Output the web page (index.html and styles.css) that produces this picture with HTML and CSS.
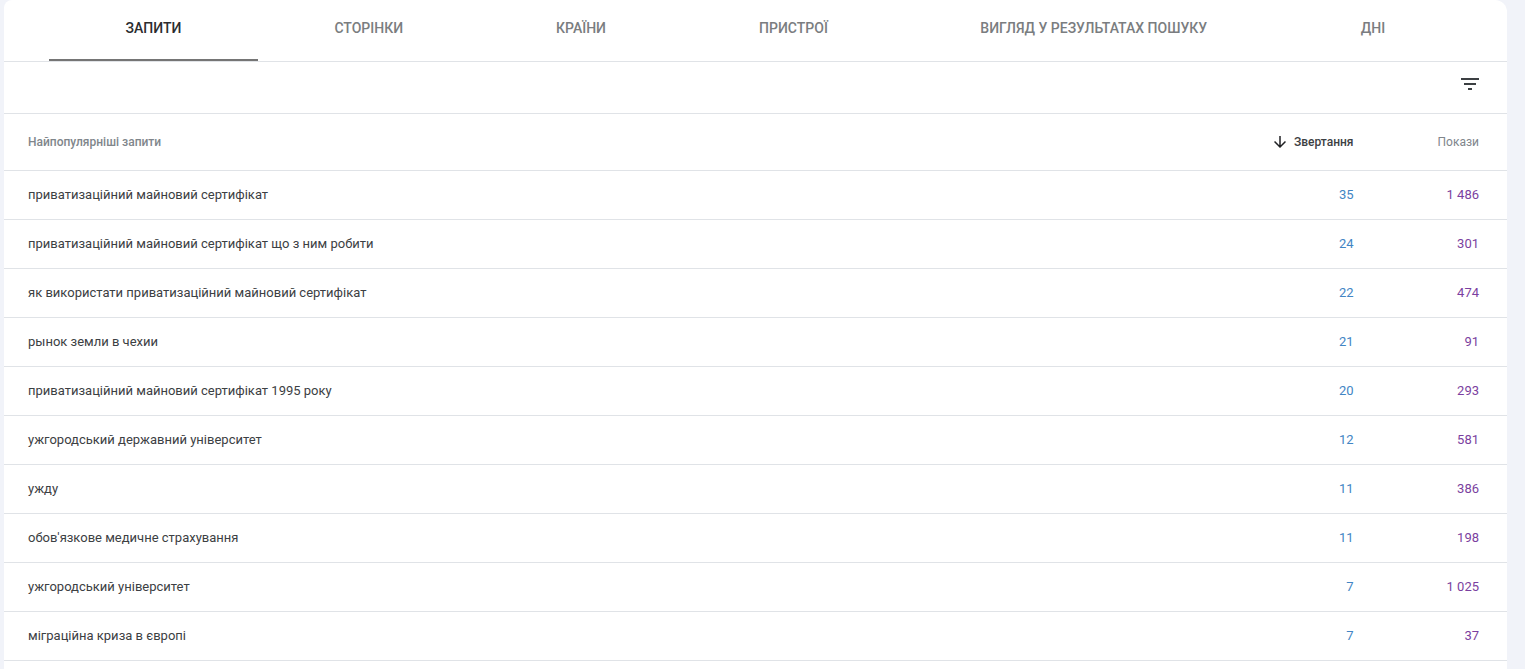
FILE: index.html
```html
<!DOCTYPE html>
<html lang="uk">
<head>
<meta charset="utf-8">
<title>Запити</title>
<link rel="stylesheet" href="styles.css">
</head>
<body>
<main class="card">
  <nav class="tabs">
    <div class="tab tab-active tab-q">ЗАПИТИ</div>
    <div class="tab tab-p">СТОРІНКИ</div>
    <div class="tab tab-c">КРАЇНИ</div>
    <div class="tab tab-d">ПРИСТРОЇ</div>
    <div class="tab tab-s">ВИГЛЯД У РЕЗУЛЬТАТАХ ПОШУКУ</div>
    <div class="tab tab-n">ДНІ</div>
  </nav>
  <div class="toolbar">
    <svg class="filter" width="24" height="24" viewBox="0 0 24 24"><path d="M3 6h18v2H3zM6 11h12v2H6zM10 16h4v2h-4z" fill="#3c4043"/></svg>
  </div>
  <div class="row head">
    <div class="name">Найпопулярніші запити</div>
    <div class="clicks head-sorted">
      <svg width="18" height="18" viewBox="0 0 24 24"><path d="M20 12l-1.41-1.41L13 16.17V4h-2v12.17l-5.58-5.59L4 12l8 8z" fill="#202124"/></svg>
      <span>Звертання</span>
    </div>
    <div class="imps">Покази</div>
  </div>
  <div class="row"><div class="name">приватизаційний майновий сертифікат</div><div class="clicks">35</div><div class="imps">1 486</div></div>
  <div class="row"><div class="name">приватизаційний майновий сертифікат що з ним робити</div><div class="clicks">24</div><div class="imps">301</div></div>
  <div class="row"><div class="name">як використати приватизаційний майновий сертифікат</div><div class="clicks">22</div><div class="imps">474</div></div>
  <div class="row"><div class="name">рынок земли в чехии</div><div class="clicks">21</div><div class="imps">91</div></div>
  <div class="row"><div class="name">приватизаційний майновий сертифікат 1995 року</div><div class="clicks">20</div><div class="imps">293</div></div>
  <div class="row"><div class="name">ужгородський державний університет</div><div class="clicks">12</div><div class="imps">581</div></div>
  <div class="row"><div class="name">ужду</div><div class="clicks">11</div><div class="imps">386</div></div>
  <div class="row"><div class="name">обов'язкове медичне страхування</div><div class="clicks">11</div><div class="imps">198</div></div>
  <div class="row"><div class="name">ужгородський університет</div><div class="clicks">7</div><div class="imps">1 025</div></div>
  <div class="row"><div class="name">міграційна криза в європі</div><div class="clicks">7</div><div class="imps">37</div></div>
</main>
</body>
</html>
```
FILE: styles.css
```css
html, body { margin: 0; height: 669px; overflow: hidden; background: #f1f3f9; }
body { padding-left: 4px; font-family: Roboto, "Liberation Sans", sans-serif; color: #3c4043; }
.card { width: 1503px; height: 669px; background: #fff; border-radius: 8px 12px 0 0; overflow: hidden; }
.tabs { display: flex; height: 61px; border-bottom: 1px solid #e0e3e7; padding-left: 45px; }
.tab { height: 61px; box-sizing: border-box; padding-top: 20px; font-size: 14px; line-height: 16px; font-weight: 500; color: #7a7d80; text-align: center; white-space: nowrap; }
.tab-q { width: 209px; }
.tab-p { width: 221.5px; }
.tab-c { width: 203px; }
.tab-d { width: 222px; }
.tab-s { width: 378.5px; }
.tab-n { width: 180px; }
.tab-active { color: #2b2c2f; border-bottom: 2px solid #757575; }
.toolbar { height: 51px; border-bottom: 1px solid #e0e3e7; display: flex; justify-content: flex-end; align-items: center; padding-right: 24px; }
.filter { display: block; margin-top: -7px; margin-right: 1px; }
.row { display: flex; align-items: center; height: 48px; border-bottom: 1px solid #e0e3e7; padding: 0 28px 0 24px; font-size: 13px; line-height: 16px; }
.row.head { height: 56px; font-size: 12px; color: #80868b; }
.name { flex: 1; color: #3c4043; }
.head .name { color: #80868b; font-weight: 500; }
.clicks { width: 150px; text-align: right; color: #4285c4; }
.imps { width: 125.5px; text-align: right; color: #7b3fa0; }
.head .imps { color: #80868b; }
.head-sorted { display: flex; justify-content: flex-end; align-items: center; gap: 5px; color: #3c4043; font-weight: 500; }
.head-sorted svg { display: block; }
```
